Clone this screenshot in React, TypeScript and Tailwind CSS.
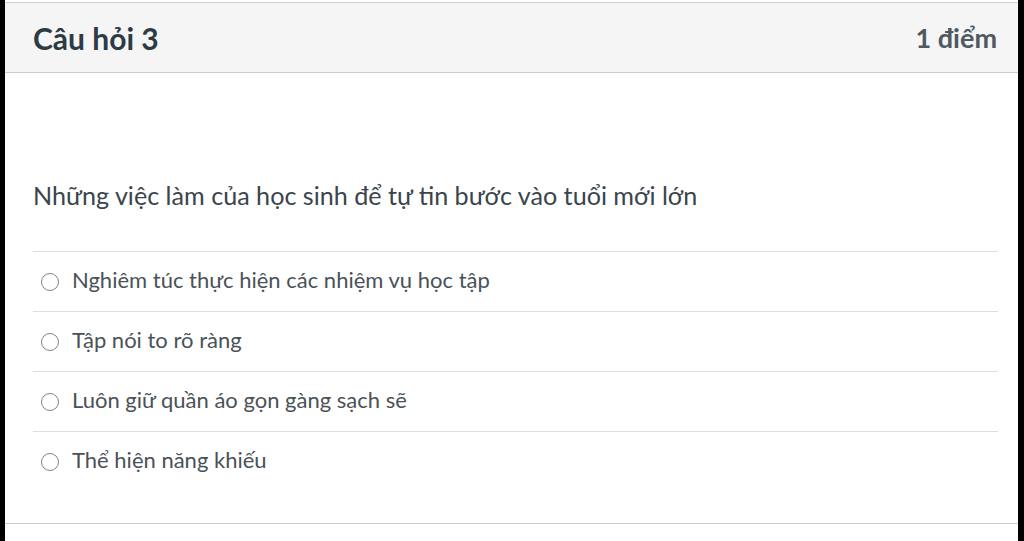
import React from "react";

const options = [
  "Nghiêm túc thực hiện các nhiệm vụ học tập",
  "Tập nói to rõ ràng",
  "Luôn giữ quần áo gọn gàng sạch sẽ",
  "Thể hiện năng khiếu",
];

export default function App() {
  return (
    <div
      className="w-[1024px] h-[541px] bg-black flex pl-[5px] pr-[6px] overflow-hidden"
      style={{ fontFamily: "Lato, 'Noto Sans', sans-serif" }}
    >
      <div className="flex-1 bg-white flex flex-col pt-[2px]">
        <div className="h-[71px] shrink-0 border-t border-b border-[#c7cdd1] bg-[#f5f5f5] flex items-center justify-between pl-[28px] pr-[21px]">
          <span className="text-[30px] font-bold text-[#2d3b45] leading-none">Câu hỏi 3</span>
          <span className="text-[27px] font-bold text-[#4f5960] leading-none">1 điểm</span>
        </div>
        <div className="pl-[28px] pr-[20px] pb-[32px] border-b border-[#c7cdd1]">
          <p className="mt-[106px] text-[25.15px] leading-[32px] text-[#3a454d]">
            Những việc làm của học sinh để tự tin bước vào tuổi mới lớn
          </p>
          <div className="mt-[40px]">
            {options.map((o) => (
              <div key={o} className="h-[60px] border-t border-[#dcdfe2] flex items-center">
                <span className="ml-[8px] w-[18px] h-[18px] rounded-full border-[1.5px] border-[#7d848a] bg-white shrink-0" />
                <span className="ml-[13px] mb-[4px] text-[22px] text-[#4a5258] leading-none">{o}</span>
              </div>
            ))}
          </div>
        </div>
      </div>
    </div>
  );
}
